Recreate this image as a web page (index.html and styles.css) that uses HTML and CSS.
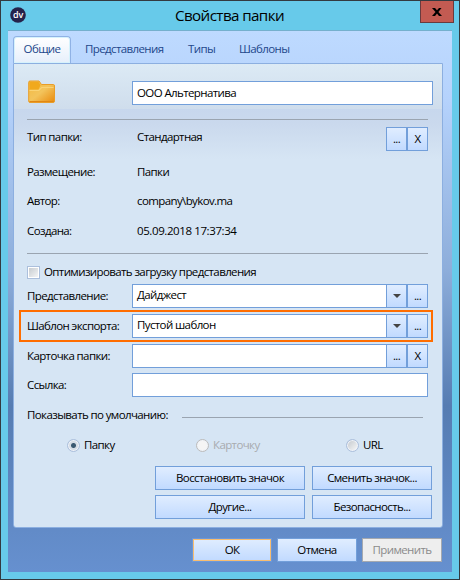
FILE: index.html
```html
<!DOCTYPE html>
<html lang="ru">
<head>
<meta charset="utf-8">
<title>Свойства папки</title>
<link rel="stylesheet" href="styles.css">
</head>
<body>
<div class="window">
  <header class="titlebar">
    <svg class="logo" width="16" height="16" viewBox="0 0 16 16"><circle cx="8" cy="8" r="7.8" fill="#25234b"/><text x="8" y="11" text-anchor="middle">dv</text></svg>
    <h1>Свойства папки</h1>
    <button class="close" aria-label="Закрыть"><svg width="10" height="8" viewBox="0 0 10 8"><path d="M0 0h3l2 2.300L7 0h2.500L6.400 3.900 10 8H7L5 5.500 3 8H0l3.500-4.100z" fill="#000"/></svg></button>
  </header>
  <main class="client">
    <nav class="tabs">
      <a class="tab active">Общие</a><a class="tab tab-views">Представления</a><a class="tab tab-types">Типы</a><a class="tab tab-templates">Шаблоны</a>
    </nav>
    <section class="panel">
      <div class="heading">
        <svg width="28" height="24" viewBox="0 0 28 24">
          <defs><linearGradient id="f" x1="0" y1="0" x2="1" y2="1"><stop offset="0" stop-color="#f4b93f"/><stop offset=".5" stop-color="#f3c45c"/><stop offset="1" stop-color="#e98a0c"/></linearGradient></defs>
          <path d="M2 1h9l2.500 3.500h12q1 0 1 1.500V21q0 1.500-1.500 1.500H2Q.7 22.500.7 21V2.300Q.7 1 2 1z" fill="url(#f)" stroke="#e99d27"/>
          <path d="M1.500 2h9l2 3-2 4.500h-9z" fill="#f1a91d"/>
          <path d="M1.500 10h9l3-3h12v1H14l-3 3H1.500z" fill="#fad375"/>
          <path d="M1.500 21.500h24" stroke="#e18712"/>
        </svg>
        <div class="field name">ООО Альтернатива</div>
      </div>
      <hr>
      <div class="row type"><span>Тип папки:</span><span class="value">Стандартная</span><div class="pair"><button class="small">...</button><button class="small">X</button></div></div>
      <div class="row info"><span>Размещение:</span><span class="value">Папки</span></div>
      <div class="row info"><span>Автор:</span><span class="value">company\bykov.ma</span></div>
      <div class="row info last"><span>Создана:</span><span class="value digits">05.09.2018 17:37:34</span></div>
      <hr>
      <label class="check"><i></i><span>Оптимизировать загрузку представления</span></label>
      <div class="row edit"><span>Представление:</span><div class="combo"><div class="field">Дайджест</div><button class="small arrow"><i></i></button><button class="small">...</button></div></div>
      <div class="row edit marked"><span>Шаблон экспорта:</span><div class="combo"><div class="field">Пустой шаблон</div><button class="small arrow"><i></i></button><button class="small">...</button></div></div>
      <div class="row edit"><span>Карточка папки:</span><div class="combo"><div class="field"></div><button class="small">...</button><button class="small">X</button></div></div>
      <div class="row edit link"><span>Ссылка:</span><div class="combo"><div class="field"></div></div></div>
      <div class="group"><span>Показывать по умолчанию:</span><i></i></div>
      <div class="radios">
        <label><i class="on"></i><span>Папку</span></label>
        <label class="off"><i></i><span>Карточку</span></label>
        <label><i></i><span>URL</span></label>
      </div>
      <div class="actions">
        <button><span>Восстановить значок</span></button><button><span>Сменить значок...</span></button>
        <button><span>Другие...</span></button><button><span>Безопасность...</span></button>
      </div>
    </section>
    <footer><button class="ok">ОК</button><button>Отмена</button><button class="disabled">Применить</button></footer>
  </main>
</div>
</body>
</html>
```
FILE: styles.css
```css
* { box-sizing: border-box; }
body { margin: 0; font: 11.5px/16px "Open Sans", "Noto Sans", sans-serif; letter-spacing: -.61px; color: #000; }
button { font: inherit; letter-spacing: inherit; color: inherit; padding: 0; margin: 0; border-radius: 0; white-space: nowrap; }
.window { width: 460px; height: 580px; border: 1px solid #333a40; background: #67caea; padding: 0 7px 7px; }
.titlebar { height: 29px; display: grid; grid-template-columns: 20px 1fr 34px; align-items: start; margin-right: -2px; }
.logo { margin: 6px 0 0 2px; }
.logo text { font: 600 9px "Open Sans", sans-serif; fill: #fff; letter-spacing: -.2px; }
h1 { margin: 4px 0 0; text-align: center; font-size: 15.2px; font-weight: 400; line-height: 21px; letter-spacing: -.6px; text-indent: 11px; }
.close { width: 34px; height: 22px; border: 1px solid #693b3e; border-top: 0; background: #c35b52; display: grid; place-items: center; }
.client { height: 542px; border-top: 1px solid #75b0cd; background: linear-gradient(#bedaff 0, #b5d2fc 70px, #a9c7f1 120px, #8dadda 240px, #567cb2 375px, #6690cf 100%); padding: 5px 10px 0 5px; }
.tabs { display: flex; height: 27px; align-items: flex-start; color: #22478b; }
.tab { line-height: 26px; height: 27px; }
.tab.active { width: 58px; text-align: center; border: 1px solid #90b2e5; border-bottom: 0; border-radius: 4px 4px 0 0; background: linear-gradient(#fff, #e6effb); box-shadow: inset 0 0 0 1px #d6f2fc; line-height: 24px; }
.tab-views { margin-left: 14px; width: 103px; }
.tab-types { width: 51px; }
.panel { height: 465px; border: 1px solid #8cafe0; border-radius: 0 0 3px 3px; padding: 0 9px 0 13px; background: linear-gradient(#dceaf5 0, #cfddec 45px, #c7d7ed 45px, #cad9ed 60px, #d6e5f4 95px, #d6e5f4 100%); width: 430px; }
.heading { height: 55px; display: flex; justify-content: space-between; align-items: flex-start; }
.heading svg { margin: 16px 0 0 1px; }
.field { background: #fff; border: 1px solid #729fda; height: 24px; line-height: 22px; padding-left: 4px; flex: 1; }
.heading .field { flex: none; width: 301px; margin-top: 17px; }
hr { border: 0; height: 1px; margin: 0 5px 0 0; background: #9aa4b0; }
.row { display: grid; grid-template-columns: 105px 1fr; margin-right: 5px; align-items: center; }
.value { padding-left: 5px; }
.digits { letter-spacing: -.4px; }
.type { height: 37px; grid-template-columns: 105px 1fr 42px; align-items: start; padding-top: 9px; }
.pair { display: flex; margin-top: -2px; }
.small { width: 21px; height: 24px; border: 1px solid #729fda; background: linear-gradient(#e0edff, #c1daff); }
.info { height: 29px; }
.info.last { height: 38px; align-items: start; padding-top: 8px; }
.check { display: flex; height: 30px; align-items: center; gap: 4px; padding-top: 6px; }
.check i { width: 13px; height: 13px; border: 1px solid #abbfdc; background: linear-gradient(135deg, #c2c7cc, #fafafa); box-shadow: inset 0 0 0 1px #fff; }
.edit { height: 24px; margin-bottom: 6px; }
.combo { display: flex; }
.combo .field { border-right: 0; line-height: 20px; }
.arrow { display: grid; place-items: center; }
.arrow i { border: 4px solid transparent; border-top-color: #444; border-bottom: 0; }
.marked { height: 32px; margin: -4px 0 2px -8px; padding: 0 3px 0 6px; border: 2px solid #ff6d00; }
.edit.link { margin-top: -1px; }
.link .field { border-right: 1px solid #729fda; }
.group { display: grid; grid-template-columns: 155px 241px; align-items: center; height: 24px; white-space: nowrap; }
.group i { height: 1px; background: #9aa4b0; margin-top: 4px; }
.radios { display: grid; grid-template-columns: 129px 150px 1fr; padding: 0 0 3px 40px; height: 39px; align-items: center; }
.radios label { display: flex; gap: 4px; align-items: center; }
.radios i { width: 13px; height: 13px; border-radius: 50%; border: 1px solid #abbfdc; background: linear-gradient(135deg, #c2c7cc, #fafafa); box-shadow: inset 0 0 0 1px #eef2f8; }
.radios .on { background: radial-gradient(circle, #3b5971 0, #3b5971 2px, #d5dce5 3px); }
.radios .off { color: #a8abaf; }
.off i { background: #f5f5f5; border-color: #bbb; }
.actions { display: grid; grid-template-columns: 150px 120px; gap: 5px 7px; margin-left: 128px; }
.actions button, footer button { height: 24px; border: 1px solid #729fda; background: linear-gradient(#e0edff, #c1daff); }
footer { display: flex; gap: 5px; justify-content: flex-end; padding-top: 10px; width: 429px; }
footer button { width: 80px; }
footer .ok { border-color: #6c98da; box-shadow: inset 0 0 0 1px #f8bd70; }
footer .disabled { background: #eee; border-color: #a5a9af; color: #8b8b8b; }
```
